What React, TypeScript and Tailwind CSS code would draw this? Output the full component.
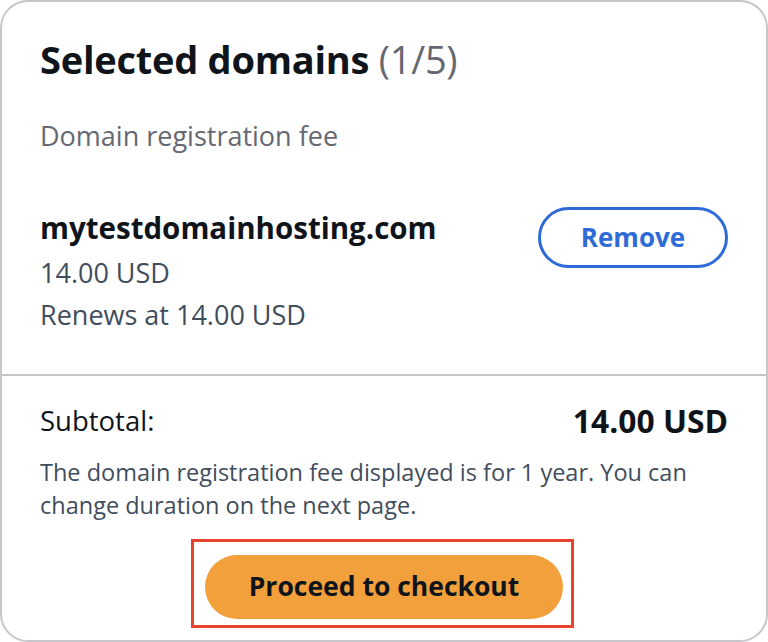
import React from "react";

export default function App() {
  return (
    <div
      className="w-[768px] h-[642px] bg-white overflow-hidden"
      style={{ fontFamily: '"Open Sans", "Noto Sans", sans-serif' }}
    >
      <div className="w-[768px] h-[642px] border-2 border-[#c6c6cd] rounded-[28px] flex flex-col">
        <div className="px-[38px] pt-[34px]">
          <h1 className="text-[38px] leading-[46px] font-bold text-[#0f141a] tracking-[-0.25px]">
            Selected domains <span className="font-normal text-[#656871]">(1/5)</span>
          </h1>
          <div className="mt-[36px] text-[27px] leading-[36px] text-[#656871]">
            Domain registration fee
          </div>
          <div className="mt-[54px] flex items-start justify-between">
            <div className="flex flex-col">
              <div className="text-[29.5px] leading-[40px] font-bold text-[#0f141a]">
                mytestdomainhosting.com
              </div>
              <div className="mt-[4px] text-[27px] leading-[42px] text-[#414d5c]">14.00 USD</div>
              <div className="text-[27px] leading-[42px] text-[#414d5c]">Renews at 14.00 USD</div>
            </div>
            <button className="mt-[-1px] w-[190px] h-[61px] rounded-full border-[3px] border-[#2f6bd8] text-[#2f6bd8] text-[26px] font-bold flex items-center justify-center">
              Remove
            </button>
          </div>
        </div>
        <div className="mt-[38px] h-[2px] bg-[#c6c6cd]" />
        <div className="px-[38px] pt-[25px] flex flex-col">
          <div className="flex items-center justify-between h-[40px]">
            <div className="text-[27.5px] leading-[40px] text-[#0f141a]">Subtotal:</div>
            <div className="text-[31.8px] leading-[40px] font-bold text-[#0f141a]">14.00 USD</div>
          </div>
          <p className="mt-[15px] text-[23.5px] leading-[33px] text-[#414d5c]">
            The domain registration fee displayed is for 1 year. You can change duration on the next page.
          </p>
          <div className="mt-[17px] flex justify-start">
            <div className="ml-[151px] border-[3px] border-[#e8432c] pt-[13px] pl-[11px] pr-[8px] pb-[6px]">
              <button className="w-[358px] h-[64px] rounded-full bg-[#f1a03b] text-[#0f141a] text-[26.5px] font-bold flex items-center justify-center">
                Proceed to checkout
              </button>
            </div>
          </div>
        </div>
      </div>
    </div>
  );
}
